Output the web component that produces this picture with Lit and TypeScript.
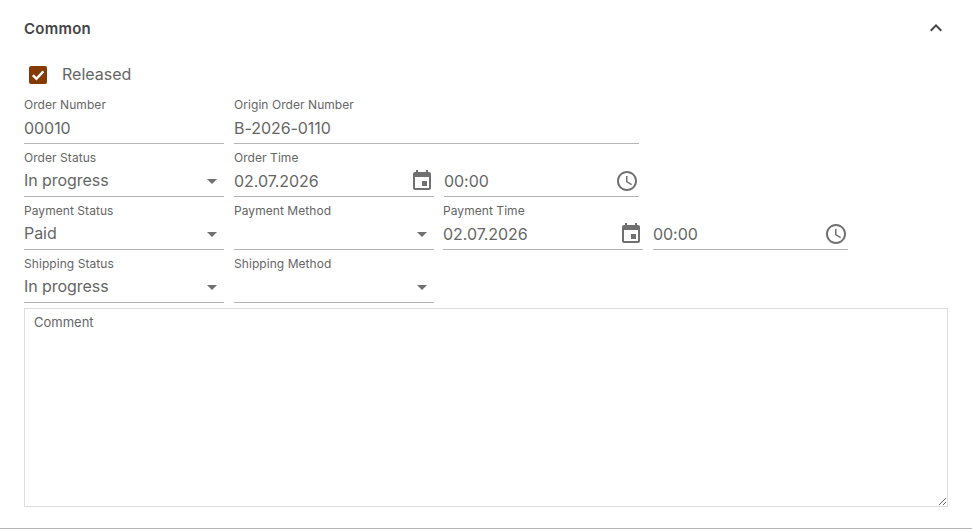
import { LitElement, html, css } from "lit";
import { customElement } from "lit/decorators.js";

const calendar = html`<svg class="ico" viewBox="0 0 24 24"><path d="M17 12h-5v5h5v-5zM16 1v2H8V1H6v2H5c-1.11 0-1.99.9-1.99 2L3 19c0 1.1.89 2 2 2h14c1.1 0 2-.9 2-2V5c0-1.1-.9-2-2-2h-1V1h-2zm3 18H5V8h14v11z"/></svg>`;
const clock = html`<svg class="ico" viewBox="0 0 24 24"><path d="M11.99 2C6.47 2 2 6.48 2 12s4.47 10 9.99 10C17.52 22 22 17.52 22 12S17.52 2 11.99 2zM12 20c-4.42 0-8-3.58-8-8s3.58-8 8-8 8 3.58 8 8-3.58 8-8 8z"/><path d="M12.5 7H11v6l5.25 3.15.75-1.23-4.5-2.67z"/></svg>`;
const arrow = html`<svg class="arrow" viewBox="0 0 24 24"><path d="M7 10l5 5 5-5z"/></svg>`;

@customElement("app-root")
export class AppRoot extends LitElement {
  static styles = css`
    :host {
      display: block;
      width: 972px;
      height: 529px;
      box-sizing: border-box;
      border-bottom: 1px solid #b4b4b4;
      background: #fff;
      font-family: Inter, "Liberation Sans", sans-serif;
      color: #4a4a4a;
      padding: 0 24px;
      overflow: hidden;
    }
    .head {
      height: 56px;
      display: flex;
      align-items: center;
      justify-content: space-between;
    }
    .title { font-size: 15px; font-weight: 600; color: #444; letter-spacing: 0.25px; }
    .chev { width: 24px; height: 24px; fill: #444; }
    .check {
      display: flex;
      align-items: center;
      height: 38px;
      padding-left: 5px;
      gap: 15px;
      font-size: 16px;
      color: #666;
    }
    .check .text { position: relative; top: -1px; }
    .box {
      width: 18px; height: 18px;
      border-radius: 2px;
      background: #843a04;
      display: flex;
      align-items: center;
      justify-content: center;
    }
    .box svg { width: 14px; height: 14px; fill: none; stroke: #fff; stroke-width: 2.5; }
    .rows { display: flex; flex-direction: column; gap: 6px; margin-top: 3px; }
    .row { display: flex; gap: 10px; }
    .field {
      width: 200px;
      height: 47px;
      box-sizing: border-box;
      border-bottom: 1px solid #b4b4b4;
      display: flex;
      flex-direction: column;
    }
    .wide { width: 405px; }
    .time { width: 195px; }
    .shift { margin-left: -1px; }
    label { font-size: 12px; line-height: 15px; color: #666; height: 15px; letter-spacing: 0.06px; }
    .value {
      flex: 1;
      display: flex;
      align-items: center;
      justify-content: space-between;
      font-size: 16px;
      color: #666;
      min-height: 0;
      letter-spacing: -0.05px;
    }
    .select span { position: relative; top: -1px; }
    .ico { width: 24px; height: 24px; fill: #707070; flex: none; }
    .arrow { width: 24px; height: 24px; fill: #707070; flex: none; }
    textarea {
      display: block;
      box-sizing: border-box;
      width: 924px;
      height: 199px;
      margin-top: 5px;
      border: 1px solid #ddd;
      padding: 5px 9px;
      font: 13px Inter, "Liberation Sans", sans-serif;
      outline: none;
    }
    textarea::placeholder { color: #666; opacity: 1; }
  `;

  private field(label: string, value: string, icon: unknown = null, cls = "") {
    return html`<div class="field ${cls}">
      <label>${label}</label>
      <div class="value"><span>${value}</span>${icon}</div>
    </div>`;
  }

  render() {
    return html`
      <div class="head">
        <span class="title">Common</span>
        <svg class="chev" viewBox="0 0 24 24"><path d="M12 8l-6 6 1.41 1.41L12 10.83l4.59 4.58L18 14z"/></svg>
      </div>
      <div class="check">
        <span class="box"><svg viewBox="0 0 14 14"><path d="M1.8 7.2l3.6 3.6L12.4 3.4"/></svg></span>
        <span class="text">Released</span>
      </div>
      <div class="rows">
        <div class="row">
          ${this.field("Order Number", "00010")}
          ${this.field("Origin Order Number", "B-2026-0110", null, "wide")}
        </div>
        <div class="row">
          ${this.field("Order Status", "In progress", arrow, "select")}
          ${this.field("Order Time", "02.07.2026", calendar)}
          ${this.field("", "00:00", clock, "time")}
        </div>
        <div class="row">
          ${this.field("Payment Status", "Paid", arrow, "select")}
          ${this.field("Payment Method", "", arrow, "select")}
          ${this.field("Payment Time", "02.07.2026", calendar, "shift")}
          ${this.field("", "00:00", clock, "time")}
        </div>
        <div class="row">
          ${this.field("Shipping Status", "In progress", arrow, "select")}
          ${this.field("Shipping Method", "", arrow, "select")}
        </div>
      </div>
      <textarea placeholder="Comment"></textarea>
    `;
  }
}
